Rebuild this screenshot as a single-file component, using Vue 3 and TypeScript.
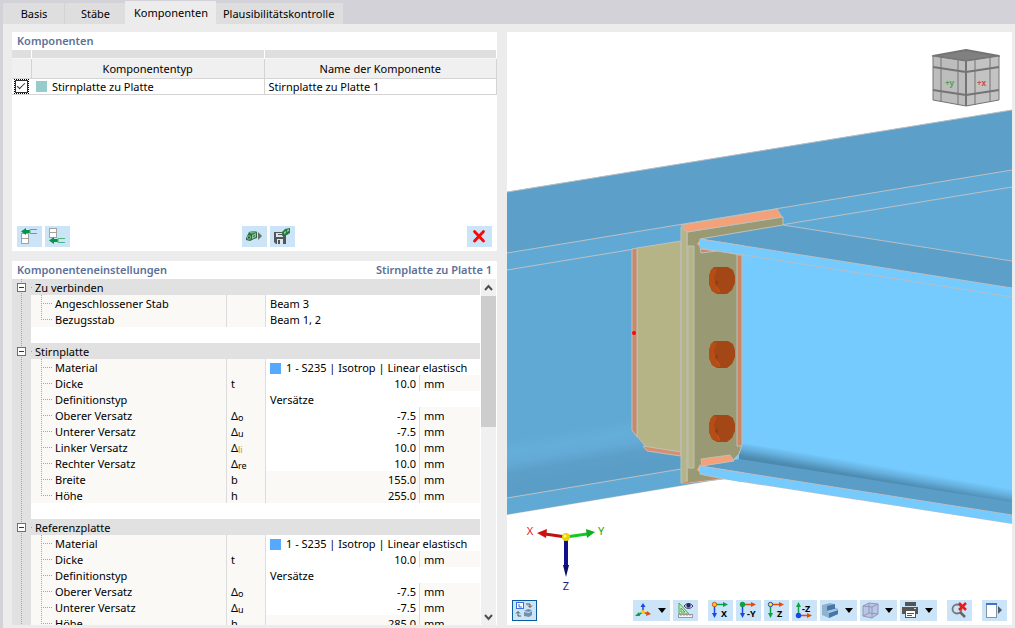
<script setup lang="ts">
import { ref } from 'vue'

interface Row {
  label: string
  sym?: string
  sub?: string
  tint?: boolean
  value: string
  unit?: string
  swatch?: boolean
  readonly?: boolean
}
interface Group {
  title: string
  rows: Row[]
}

const tabs = ['Basis', 'Stäbe', 'Komponenten', 'Plausibilitätskontrolle']
const activeTab = ref('Komponenten')
const enabled = ref(true)

const material = '1 - S235 | Isotrop | Linear elastisch'

const groups = ref<Group[]>([
  {
    title: 'Zu verbinden',
    rows: [
      { label: 'Angeschlossener Stab', value: 'Beam 3' },
      { label: 'Bezugsstab', value: 'Beam 1, 2' },
    ],
  },
  {
    title: 'Stirnplatte',
    rows: [
      { label: 'Material', value: material, swatch: true },
      { label: 'Dicke', sym: 't', value: '10.0', unit: 'mm' },
      { label: 'Definitionstyp', value: 'Versätze' },
      { label: 'Oberer Versatz', sym: 'Δ', sub: 'o', value: '-7.5', unit: 'mm' },
      { label: 'Unterer Versatz', sym: 'Δ', sub: 'u', value: '-7.5', unit: 'mm' },
      { label: 'Linker Versatz', sym: 'Δ', sub: 'li', tint: true, value: '10.0', unit: 'mm' },
      { label: 'Rechter Versatz', sym: 'Δ', sub: 're', value: '10.0', unit: 'mm' },
      { label: 'Breite', sym: 'b', value: '155.0', unit: 'mm', readonly: true },
      { label: 'Höhe', sym: 'h', value: '255.0', unit: 'mm', readonly: true },
    ],
  },
  {
    title: 'Referenzplatte',
    rows: [
      { label: 'Material', value: material, swatch: true },
      { label: 'Dicke', sym: 't', value: '10.0', unit: 'mm' },
      { label: 'Definitionstyp', value: 'Versätze' },
      { label: 'Oberer Versatz', sym: 'Δ', sub: 'o', value: '-7.5', unit: 'mm' },
      { label: 'Unterer Versatz', sym: 'Δ', sub: 'u', value: '-7.5', unit: 'mm' },
      { label: 'Höhe', sym: 'h', value: '285.0', unit: 'mm', readonly: true },
    ],
  },
])

const bolts = [280, 354, 428]
</script>

<template>
  <div class="app">
    <nav class="tabs" role="tablist">
      <button
        v-for="tab in tabs"
        :key="tab"
        type="button"
        role="tab"
        class="tab"
        :class="{ active: tab === activeTab }"
        :aria-selected="tab === activeTab"
        @click="activeTab = tab"
      >{{ tab }}</button>
    </nav>

    <main class="main">
      <div class="left">
        <section class="panel list-panel">
          <header class="title"><h2>Komponenten</h2></header>
          <table class="list">
            <colgroup><col class="c-check" /><col /><col /></colgroup>
            <thead>
              <tr class="strip"><td></td><td></td><td></td></tr>
              <tr class="heads"><th></th><th>Komponententyp</th><th>Name der Komponente</th></tr>
            </thead>
            <tbody>
              <tr>
                <td class="check"><input v-model="enabled" type="checkbox" aria-label="Stirnplatte zu Platte" /></td>
                <td><span class="type"><i class="chip teal"></i>Stirnplatte zu Platte</span></td>
                <td>Stirnplatte zu Platte 1</td>
              </tr>
            </tbody>
          </table>
          <footer class="list-tools">
            <div class="group">
              <button type="button" class="tool" aria-label="Oben einfügen">
                <svg viewBox="0 0 25 21">
                  <g fill="#fff" stroke="#a2a2a2"><rect x="4.500" y="7.500" width="7" height="5" /><rect x="4.500" y="12.500" width="7" height="5" /></g>
                  <path d="M4 5.500 9 2v2h4v3H9v2z" fill="#079447" />
                  <path d="M20 3.500h-7v4h7" fill="none" stroke="#4bb67b" />
                </svg>
              </button>
              <button type="button" class="tool" aria-label="Unten einfügen">
                <svg viewBox="0 0 25 21">
                  <g fill="#fff" stroke="#a2a2a2"><rect x="4.500" y="2.500" width="7" height="4" /><rect x="4.500" y="6.500" width="7" height="5" /></g>
                  <path d="M4 14.500 9 11v2h4v3H9v2z" fill="#079447" />
                  <path d="M20 12.500h-7v4h7" fill="none" stroke="#4bb67b" />
                </svg>
              </button>
            </div>
            <div class="group">
              <button type="button" class="tool" aria-label="Bibliothek öffnen">
                <svg viewBox="0 0 25 21">
                  <path d="M4 12 7 6l6-1 2 1v6l-3 1-4 2-4-1z" fill="#2b6b40" />
                  <path d="M7 6l6-1 2 1-6 2z" fill="#6fae80" />
                  <path d="M10 9l4-2v4l-4 2z" fill="#8bc39a" /><path d="M11 10l2-1v1l-2 1z" fill="#2b6b40" />
                  <circle cx="7" cy="11.500" r="2.200" fill="#78b489" /><circle cx="7" cy="11.500" r="1" fill="#184c29" />
                  <path d="M16 6l4 4-4 4z" fill="#66736c" />
                </svg>
              </button>
              <button type="button" class="tool" aria-label="In Bibliothek speichern">
                <svg viewBox="0 0 25 21">
                  <path d="M4 6h12v12H6l-2-2z" fill="#555" />
                  <path d="M6 7h7v4H6zM7 13h6v5H7z" fill="#d6e7f5" />
                  <path d="M8 14h2v4H8zM8 8h4v1H8z" fill="#555" />
                  <path d="M12 6l3-3 5-1v5l-3 2-5 1z" fill="#2d7743" />
                  <path d="M14 6l2-1v2l-2 1zM17 4l2-1v2l-2 1z" fill="#8bc39a" />
                </svg>
              </button>
            </div>
            <button type="button" class="tool" aria-label="Löschen">
              <svg viewBox="0 0 25 21"><path d="M7.500 5.500l9 9.500M16.500 5.500l-9 9.500" stroke="#f90808" stroke-width="2.800" stroke-linecap="round" /></svg>
            </button>
          </footer>
        </section>

        <section class="panel tree-panel">
          <header class="title"><h2>Komponenteneinstellungen</h2><h2>Stirnplatte zu Platte 1</h2></header>
          <div class="tree-area">
            <div class="tree-clip">
              <table class="tree">
                <colgroup><col class="c-gutter" /><col class="c-name" /><col class="c-sym" /><col class="c-value" /><col /></colgroup>
                <tbody v-for="g in groups" :key="g.title">
                  <tr class="head">
                    <td class="gutter"><button type="button" class="fold" :aria-label="g.title"></button></td>
                    <th colspan="4" scope="colgroup">{{ g.title }}</th>
                  </tr>
                  <tr v-for="(r, i) in g.rows" :key="r.label" :class="{ readonly: r.readonly }">
                    <td class="gutter"></td>
                    <th class="name" :class="{ last: i === g.rows.length - 1 }" scope="row">{{ r.label }}</th>
                    <td class="sym">{{ r.sym }}<small v-if="r.sub" :class="{ tint: r.tint }">{{ r.sub }}</small></td>
                    <template v-if="r.unit">
                      <td class="num">{{ r.value }}</td>
                      <td class="unit">{{ r.unit }}</td>
                    </template>
                    <td v-else class="text" colspan="2"><span class="type"><i v-if="r.swatch" class="chip blue"></i>{{ r.value }}</span></td>
                  </tr>
                  <tr class="blank"><td class="gutter"></td><td colspan="4"></td></tr>
                </tbody>
              </table>
            </div>
            <div class="scroll">
              <button type="button" aria-label="Nach oben"><svg viewBox="0 0 15 17"><path d="M4 11l3.500-4 3.500 4" fill="none" stroke="#505050" stroke-width="2" /></svg></button>
              <div class="track"><div class="thumb"></div></div>
              <button type="button" aria-label="Nach unten"><svg viewBox="0 0 15 17"><path d="M4 7l3.500 4L11 7" fill="none" stroke="#505050" stroke-width="2" /></svg></button>
            </div>
          </div>
        </section>
      </div>

      <section class="view">
        <svg class="scene" viewBox="507 32 505 593" preserveAspectRatio="xMidYMid slice">
          <defs>
            <linearGradient id="fillet" gradientUnits="userSpaceOnUse" x1="560" y1="430" x2="568" y2="478">
              <stop offset="0" stop-color="#61a9d5" />
              <stop offset=".3" stop-color="#66aeda" />
              <stop offset=".5" stop-color="#63aad6" />
              <stop offset=".7" stop-color="#5ca0ca" />
              <stop offset="1" stop-color="#5a9dc7" />
            </linearGradient>
            <linearGradient id="shade" gradientUnits="userSpaceOnUse" x1="882" y1="466" x2="879" y2="483">
              <stop offset="0" stop-color="#75cbfe" />
              <stop offset=".4" stop-color="#65b0dd" />
              <stop offset=".8" stop-color="#4f8fb5" />
              <stop offset="1" stop-color="#4b86aa" />
            </linearGradient>
          </defs>

          <!-- continuous beam -->
          <path d="M507 192 1012 110V500H720L507 515z" fill="#61a9d5" />
          <path d="M507 192 1012 110V170L507 253z" fill="#5c9fc8" />
          <path d="M507 420 681 395V470L507 498z" fill="url(#fillet)" />
          <path d="M507 498 723 462V479L507 515z" fill="#61a9d5" />
          <path d="M507 192 1012 110M507 253 1012 170M507 270 1012 187M507 498 681 469M507 515 723 479" fill="none" stroke="#bdc0c4" />

          <!-- connected beam -->
          <path d="M700 239 783 225 1012 261V288z" fill="#5c9fc8" />
          <path d="M700 239 1012 288V524L725 479 700 474z" fill="#75cbfe" />
          <path d="M739 443 1012 485V503L739 461z" fill="url(#shade)" />
          <path d="M700 466 740 459 1012 502V515z" fill="#5a9dc7" />
          <path d="M783 225 1012 261M700 239 1012 288M700 248 1012 297M700 466 1012 515M700 474 725 479 1012 524" fill="none" stroke="#b9bec4" />
          <path d="M507 515 723 479 1012 524V560H507z" fill="#fff" />

          <!-- stiffener plate behind the end plate -->
          <g stroke="#c0c0ba">
            <path d="M637 248 681 241V452L646 447 637 436z" fill="#b5b487" />
            <path d="M632 249 637 248V437L632 430z" fill="#cb8766" />
            <path d="M643 446 681 452V456L647 451z" fill="#d98e6b" />
          </g>
          <circle cx="634" cy="333" r="2" fill="#fa0707" />

          <!-- end plate -->
          <g stroke="#bfc0b8">
            <path d="M687 232 783 217V225L700 239V248L741 255V448L739 454 733 460 700 466V474L723 479 687 483z" fill="#999a74" />
            <path d="M681 225 777 209 782 217 687 232z" fill="#f4a179" />
            <path d="M681 227 687 232V483H681z" fill="#b5b487" />
            <path d="M688 246H694V468H688z" fill="#b5b487" />
            <path d="M737 255 742 255V446H737z" fill="#cb8766" />
            <path d="M701 459 730 455 734 461 702 466z" fill="#f4a179" />
            <path d="M700 249 717 251 701 253z" fill="#c98766" />
          </g>
          <path d="M683 483 722 477" stroke="#cb8766" />
          <path d="M697 244 700 240 702 240 701 247zM697 470 700 464 702 468 701 473z" fill="#f4b08d" />
          <path d="M700 239 742 246 742 255 700 248z" fill="#75cbfe" />
          <path d="M700 239 744 246M700 248 744 255" stroke="#b9bec4" />
          <path d="M700 466 742 473V482L725 479 700 474z" fill="#75cbfe" />
          <path d="M700 466 744 473M700 474 725 479" stroke="#b9bec4" />

          <!-- bolt heads -->
          <g v-for="y in bolts" :key="y" :transform="`translate(722 ${y})`">
            <path d="M-8-13H6L11-10 13-4V3L10 10 5 14H-5L-10 11-13 4V-4L-11-10z" fill="#a44716" />
            <path d="M-8-12-5-11-8-3-6 4-2 13H-5L-10 11-13 4V-4L-11-10z" fill="#b64d16" />
            <path d="M-6 0-4 2-5 6-7 3z" fill="#8f3d12" />
            <path d="M-5 7-2 12" stroke="#c95a1c" />
          </g>

          <!-- navigation cube -->
          <g stroke="#747474" stroke-linejoin="round">
            <path d="M933 56 966 50 999 56 966 61z" fill="#808080" stroke-width="2" />
            <path d="M933 56 966 61V106L933 100z" fill="#bdbdbd" />
            <path d="M999 56 966 61V106L999 100z" fill="#c3c3c3" />
            <path d="M933 67 966 72 999 67M933 90 966 95 999 90" fill="none" stroke-width="2" />
            <path d="M941 57V102M958 60V105M975 60V105M990 57V102" />
            <path d="M966 61V106" stroke-width="2" />
          </g>
          <g class="cube-text"><text x="945" y="86" fill="#4aa65a">+y</text><text x="977" y="86" fill="#cf5050">+x</text></g>

          <!-- axes -->
          <path d="M566 537 545 534" stroke="#bb1414" stroke-width="3" />
          <path d="M537 533 547 529 546 538z" fill="#d01010" />
          <path d="M566 537 587 534" stroke="#14c828" stroke-width="3" />
          <path d="M595 532 586 529 587 538z" fill="#0fae1e" />
          <path d="M566 537V567" stroke="#11118c" stroke-width="4" />
          <path d="M566 577 563 565H569z" fill="#0b0b6a" />
          <circle cx="566" cy="537" r="4" fill="#e8d800" />
          <circle cx="565" cy="536" r="1.500" fill="#fff88a" />
          <g class="axis-text"><text x="530" y="535" fill="#e01818">X</text><text x="601" y="535" fill="#18a818">Y</text><text x="566" y="590" fill="#22227e">Z</text></g>
        </svg>

        <div class="view-tools">
          <button type="button" class="tool picked" aria-label="Ansicht umschalten">
            <svg viewBox="0 0 25 21">
              <rect x="4.500" y="2.500" width="7" height="6" fill="#fff" stroke="#3c6fe0" />
              <path d="M7 4v3h3" stroke="#3c6fe0" fill="none" />
              <path d="M14 4h4v3M16 5.500l2 2 2-2M9 16H6v-4M4 13.500l2-2 2 2" fill="none" stroke="#555" />
              <path d="M12 11l4-2 4 1-3 2zM12 12l5 1v4l-5-1zM17 13l3-2v4l-3 2z" fill="#7290ad" />
            </svg>
          </button>
          <div class="right-tools">
            <button type="button" class="tool wide" aria-label="Koordinatensystem">
              <svg viewBox="0 0 25 21">
                <path d="M10 12V6" stroke="#1747e6" stroke-width="1.500" /><path d="M10 3l2.500 4h-5z" fill="#1747e6" />
                <path d="M10 12l-5 3" stroke="#0fa046" stroke-width="1.500" /><path d="M2 16l4-4 1 4z" fill="#0fa046" />
                <path d="M10 12l5 2" stroke="#e24a10" stroke-width="1.500" /><path d="M18 14l-4-3-1 5z" fill="#e24a10" />
                <circle cx="10" cy="12" r="2" fill="#ffcf12" />
              </svg>
              <i class="caret"></i>
            </button>
            <button type="button" class="tool" aria-label="Maße anzeigen">
              <svg viewBox="0 0 25 21">
                <path d="M6 3v11h10z" fill="#b9edb2" stroke="#59a85e" /><path d="M8 8v4h4z" fill="#cce4f7" stroke="#59a85e" />
                <rect x="5.500" y="14.500" width="14" height="3" fill="#f4f4f4" stroke="#999" /><path d="M8 15v1M11 15v1M14 15v1M17 15v1" stroke="#999" />
                <path d="M11 6q4.500-5 9 0-4.500 5-9 0z" fill="#fff" stroke="#2c315c" /><circle cx="15.500" cy="5.500" r="2.200" fill="#24296a" />
              </svg>
            </button>
            <div class="group axis-set">
              <button type="button" class="tool" aria-label="Ansicht X">
                <svg viewBox="0 0 25 21"><path d="M7 4.500h9" stroke="#0fa046" stroke-width="1.500" /><path d="M20 4.500l-5-2.500v5z" fill="#0fa046" /><path d="M6.500 5v8" stroke="#1747e6" stroke-width="1.500" /><path d="M6.500 18l-2.500-5h5z" fill="#1747e6" /><circle cx="6.500" cy="4.500" r="2.200" fill="#ffcf12" stroke="#e24a10" /><text x="13" y="17">X</text></svg>
              </button>
              <button type="button" class="tool" aria-label="Ansicht -Y">
                <svg viewBox="0 0 25 21"><path d="M7 4.500h9" stroke="#e24a10" stroke-width="1.500" /><path d="M20 4.500l-5-2.500v5z" fill="#e24a10" /><path d="M6.500 5v8" stroke="#1747e6" stroke-width="1.500" /><path d="M6.500 18l-2.500-5h5z" fill="#1747e6" /><circle cx="6.500" cy="4.500" r="2.700" fill="#0fa046" /><text x="11" y="17">-Y</text></svg>
              </button>
              <button type="button" class="tool" aria-label="Ansicht Z">
                <svg viewBox="0 0 25 21"><path d="M7 4.500h9" stroke="#e24a10" stroke-width="1.500" /><path d="M20 4.500l-5-2.500v5z" fill="#e24a10" /><path d="M6.500 5v8" stroke="#0fa046" stroke-width="1.500" /><path d="M6.500 18l-2.500-5h5z" fill="#0fa046" /><circle cx="6.500" cy="4.500" r="2.200" fill="#ffe312" stroke="#1747e6" /><text x="13" y="17">Z</text></svg>
              </button>
              <button type="button" class="tool" aria-label="Ansicht -Z">
                <svg viewBox="0 0 25 21"><path d="M7 15.500h9" stroke="#e24a10" stroke-width="1.500" /><path d="M20 15.500l-5-2.500v5z" fill="#e24a10" /><path d="M6.500 15V7" stroke="#0fa046" stroke-width="1.500" /><path d="M6.500 2l2.500 5h-5z" fill="#0fa046" /><circle cx="6.500" cy="15.500" r="2.700" fill="#1747e6" /><text x="10" y="12">-Z</text></svg>
              </button>
              <button type="button" class="tool wide" aria-label="Darstellung">
                <svg viewBox="0 0 25 21">
                  <path d="M2 5l8-2 4 1v3l4 2v5l-9 4-7-3z" fill="#8fb2d0" />
                  <path d="M7 6l8-2v5l-8 2zM9 13l9-3v4l-9 4z" fill="#4477a8" />
                  <path d="M7 11l8-2 3 1-9 3z" fill="#a9c8e2" />
                </svg>
                <i class="caret"></i>
              </button>
              <button type="button" class="tool wide" aria-label="Transparenz">
                <svg viewBox="0 0 25 21">
                  <path d="M3 6l6-3 9 1v10l-6 4-9-2z" fill="#b9c6e5" /><path d="M3 6l6-3 9 1-6 3zM3 6v10l9 2V7M12 18l6-4V4M9 3v10l9 1M9 13l-6 3" fill="none" stroke="#9396b5" />
                </svg>
                <i class="caret"></i>
              </button>
              <button type="button" class="tool wide" aria-label="Drucken">
                <svg viewBox="0 0 25 21">
                  <path d="M5 2h11v4H5zM2 7h16v7H2z" fill="#555" /><path d="M5 10h11v8H5z" fill="#555" /><path d="M6 11h9v6H6z" fill="#fff" /><path d="M7 13.500h7M7 15.500h5" stroke="#555" /><path d="M14 8.500h2" stroke="#ddd" />
                </svg>
                <i class="caret"></i>
              </button>
            </div>
            <button type="button" class="tool" aria-label="Auswahl aufheben">
              <svg viewBox="0 0 25 21"><circle cx="10" cy="9" r="4.500" fill="none" stroke="#777" stroke-width="1.800" /><path d="M13 12l5 5" stroke="#666" stroke-width="2.500" /><path d="M12 3l7 7M19 3l-7 7" stroke="#ef1717" stroke-width="2.500" /></svg>
            </button>
            <button type="button" class="tool" aria-label="Seitenleiste">
              <svg viewBox="0 0 25 21"><rect x="4.500" y="3.500" width="10" height="14" fill="#fff" stroke="#8293a3" /><path d="M4 3h11v2H4z" fill="#3f73c4" /><path d="M16 6l4 4-4 4z" fill="#4b5a68" /></svg>
            </button>
          </div>
        </div>
      </section>
    </main>
  </div>
</template>

<style>
body {
  margin: 0;
}
</style>

<style scoped>
.app {
  display: flex;
  flex-direction: column;
  height: 100vh;
  box-sizing: border-box;
  padding-left: 3px;
  overflow: hidden;
  background: #d2d2d8;
  color: #000;
  font: 11px/16px "Noto Sans", "Open Sans", sans-serif;
}
button {
  font: inherit;
  color: inherit;
  border: 0;
  padding: 0;
  cursor: pointer;
}
.tabs {
  display: flex;
  align-items: flex-end;
  height: 24px;
  flex: none;
}
.tab {
  height: 21px;
  padding: 1px 8px 0 9px;
  background: #dedede;
  min-width: 61px;
}
.tab + .tab {
  border-left: 1px solid #d2d2d4;
}
.tab.active {
  height: 23px;
  background: #ececec;
  border-left: 0;
}
.tab.active + .tab {
  border-left: 0;
  padding: 1px 9px 0 7px;
}
.main {
  flex: 1;
  min-height: 0;
  display: grid;
  grid-template-columns: 485fr 505fr;
  gap: 10px;
  padding: 8px 3px 3px 9px;
  background: #ececec;
}
.left {
  display: flex;
  flex-direction: column;
  gap: 10px;
  min-height: 0;
  min-width: 0;
}
.panel {
  background: #fff;
  display: flex;
  flex-direction: column;
}
.list-panel {
  flex: 219;
}
.tree-panel {
  flex: 364;
  min-height: 0;
  overflow: hidden;
}
.title {
  display: flex;
  justify-content: space-between;
  flex: none;
  height: 18px;
  padding: 0 5px;
}
.title h2 {
  margin: 0;
  font-size: 11px;
  line-height: 18px;
  font-weight: 600;
  color: #5c7099;
}
table {
  border-collapse: separate;
  border-spacing: 0;
  table-layout: fixed;
  width: 100%;
}
th,
td {
  padding: 0;
  font-weight: 400;
  text-align: left;
  white-space: nowrap;
  overflow: hidden;
}
.c-check {
  width: 20px;
}
.list td,
.list th {
  border-right: 1px solid #d4d4d4;
  border-bottom: 1px solid #d4d4d4;
  box-sizing: border-box;
}
.list .strip td {
  height: 9px;
  background: #dfdfdf;
  border-right-color: #fff;
  border-bottom-color: #f6f6f6;
}
.list .heads th {
  height: 20px;
  background: #f0f0f0;
  text-align: center;
}
.list tbody td {
  height: 16px;
  line-height: 15px;
  padding-left: 4px;
}
.list tbody td.check {
  padding: 0 0 0 2px;
  border-right: 0;
}
.check input {
  appearance: none;
  display: block;
  position: relative;
  box-sizing: border-box;
  width: 15px;
  height: 15px;
  margin: 0;
  padding: 0;
  border: 1px dotted #000;
  background: #fff;
}
.check input::before {
  content: "";
  position: absolute;
  inset: 0;
  border: 1px solid #333;
}
.check input:checked::after {
  content: "";
  position: absolute;
  left: 2px;
  top: 3px;
  width: 7px;
  height: 3px;
  border-left: 1px solid #333;
  border-bottom: 1px solid #333;
  transform: rotate(-45deg);
}
.type {
  display: flex;
  align-items: center;
}
.chip {
  width: 11px;
  height: 11px;
  margin-right: 5px;
}
.teal {
  background: #97cccc;
}
.blue {
  background: #55aaff;
}
.list-tools {
  display: flex;
  justify-content: space-between;
  margin-top: auto;
  padding: 0 5px 4px;
}
.group {
  display: flex;
  gap: 3px;
}
.tool {
  display: flex;
  align-items: center;
  flex: none;
  width: 25px;
  height: 21px;
  background: #cce4f7;
}
.tool svg {
  display: block;
  flex: none;
  width: 25px;
  height: 21px;
}
.tool text {
  font: 700 9px "Noto Sans", sans-serif;
}
.tool.wide {
  width: 37px;
}
.caret {
  border: 4px solid transparent;
  border-top: 5px solid #000;
  border-bottom: 0;
}
.tool.picked {
  outline: 1px solid #0c5c9c;
  outline-offset: -1px;
}
.tree-area {
  flex: 1;
  min-height: 0;
  display: flex;
}
.tree-clip {
  flex: 1;
  min-width: 0;
  overflow-x: hidden;
  overflow-y: auto;
  scrollbar-width: none;
}
.c-gutter {
  width: 19px;
}
.c-name {
  width: 195px;
}
.c-sym {
  width: 39px;
}
.c-value {
  width: 154px;
}
.tree td,
.tree th {
  box-sizing: border-box;
  height: 16px;
  line-height: 14px;
  padding-top: 2px;
}
.tree .gutter {
  padding-top: 0;
  background: linear-gradient(#a6a6a6 50%, transparent 50%) 9px 0 / 1px 2px repeat-y #e1e1e1;
}
.tree .head th {
  background: linear-gradient(90deg, #a6a6a6 50%, transparent 50%) 0 8px / 2px 1px no-repeat #e1e1e1;
  padding-left: 4px;
}
.fold {
  display: block;
  box-sizing: border-box;
  width: 9px;
  height: 9px;
  margin-left: 5px;
  border: 1px solid #6f6f6f;
  background: linear-gradient(#333, #333) center / 5px 1px no-repeat #fff;
}
.tree .name {
  padding-left: 24px;
  background:
    repeating-linear-gradient(90deg, #a6a6a6 0 1px, transparent 1px 2px) 10px 8px / 12px 1px no-repeat,
    repeating-linear-gradient(#a6a6a6 0 1px, transparent 1px 2px) 10px 0 / 1px 16px no-repeat,
    #faf9f5;
}
.tree .name.last {
  background:
    repeating-linear-gradient(90deg, #a6a6a6 0 1px, transparent 1px 2px) 10px 8px / 12px 1px no-repeat,
    repeating-linear-gradient(#a6a6a6 0 1px, transparent 1px 2px) 10px 0 / 1px 8px no-repeat,
    #faf9f5;
}
.tree .sym {
  border-left: 1px solid #dcdcdc;
  background: #faf9f5;
  padding-left: 4px;
}
.sym small {
  font-size: 9px;
  line-height: 9px;
  vertical-align: -1px;
}
.sym .tint {
  color: #d08a3c;
}
.tree .text,
.tree .num {
  border-left: 1px solid #dcdcdc;
  padding-left: 4px;
}
.tree .num {
  text-align: right;
  padding-right: 3px;
}
.tree .unit {
  border-left: 1px solid #dcdcdc;
  padding-left: 4px;
  background: #faf9f5;
}
.tree .readonly .num {
  background: #faf9f5;
}
.scroll {
  display: flex;
  flex-direction: column;
  width: 15px;
  flex: none;
  margin: 0 1px;
  background: #f0f0f0;
}
.scroll button {
  height: 17px;
  background: #f0f0f0;
}
.scroll svg {
  display: block;
  width: 15px;
  height: 17px;
}
.track {
  flex: 1;
}
.thumb {
  height: 42%;
  background: #cdcdcd;
}
.view {
  position: relative;
  display: flex;
  flex-direction: column;
  justify-content: flex-end;
  min-width: 0;
  background: #fff;
  overflow: hidden;
}
.scene {
  position: absolute;
  inset: 0;
  width: 100%;
  height: 100%;
}
.cube-text {
  font: 700 8px "Noto Sans", sans-serif;
}
.axis-text {
  font: 11px "Noto Sans", sans-serif;
  text-anchor: middle;
}
.view-tools {
  position: relative;
  display: flex;
  justify-content: space-between;
  padding: 0 5px 4px;
}
.right-tools {
  display: flex;
  gap: 3px;
}
.axis-set {
  margin: 0 7px;
}
.right-tools > .tool:last-child {
  margin-left: 7px;
}
</style>
